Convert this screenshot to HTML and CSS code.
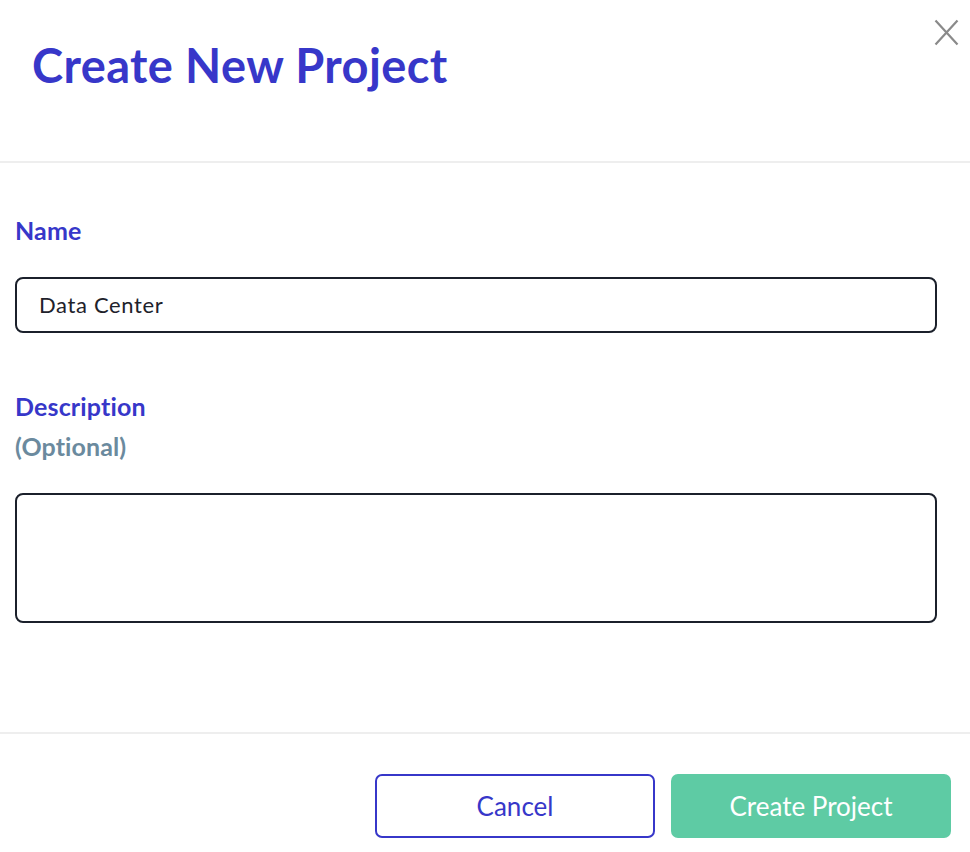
FILE: index.html
```html
<!DOCTYPE html>
<html>
<head>
<meta charset="utf-8">
<link rel="stylesheet" href="styles.css">
</head>
<body>
<div class="modal">
  <header class="modal-header">
    <h1 class="title">Create New Project</h1>
    <button class="close" aria-label="Close">
      <svg width="25" height="27" viewBox="0 0 25 27"><path d="M1.5 1.5 L23.5 25.5 M23.5 1.5 L1.5 25.5" stroke="#8a8a8a" stroke-width="2.2" fill="none"/></svg>
    </button>
  </header>
  <main class="modal-body">
    <label class="label name-label">Name</label>
    <div class="input">Data Center</div>
    <label class="label desc-label">Description</label>
    <div class="optional">(Optional)</div>
    <div class="textarea"></div>
  </main>
  <footer class="modal-footer">
    <button class="btn btn-cancel">Cancel</button>
    <button class="btn btn-create">Create Project</button>
  </footer>
</div>
</body>
</html>
```

FILE: styles.css
```css
html, body {
  margin: 0;
  padding: 0;
  background: #ffffff;
}
body {
  font-family: Lato, "Open Sans", sans-serif;
  width: 970px;
  height: 852px;
  overflow: hidden;
}
.modal {
  display: flex;
  flex-direction: column;
}
.modal-header {
  height: 161px;
  border-bottom: 2px solid #eeeeee;
  display: flex;
  justify-content: space-between;
  align-items: flex-start;
  padding: 0 11px 0 32px;
}
.title {
  margin: 37px 0 0 0;
  font-size: 47px;
  line-height: 56px;
  font-weight: 700;
  color: #3737c9;
  letter-spacing: 0.4px;
}
.close {
  margin-top: 19px;
  padding: 0;
  border: 0;
  background: none;
  display: flex;
}
.modal-body {
  height: 569px;
  border-bottom: 2px solid #eeeeee;
  padding: 0 33px 0 15px;
  display: flex;
  flex-direction: column;
}
.label {
  display: block;
  font-size: 25px;
  line-height: 28px;
  font-weight: 700;
  color: #3737c9;
  padding-left: 0;
  letter-spacing: 0.15px;
}
.name-label {
  margin-top: 53px;
}
.input {
  margin-top: 33px;
  height: 52px;
  border: 2px solid #1b202b;
  border-radius: 8px;
  box-sizing: content-box;
  padding: 0 22px;
  font-size: 22px;
  line-height: 52px;
  letter-spacing: 0.65px;
  color: #1e222b;
}
.desc-label {
  margin-top: 59px;
}
.optional {
  margin-top: 12px;
  font-size: 25px;
  line-height: 28px;
  font-weight: 700;
  color: #6b8a9e;
  letter-spacing: 0.1px;
}
.textarea {
  margin-top: 33px;
  height: 126px;
  border: 2px solid #1b202b;
  border-radius: 8px;
}
.modal-footer {
  display: flex;
  justify-content: flex-end;
  gap: 16px;
  padding: 40px 19px 0 0;
}
.btn {
  width: 280px;
  height: 64px;
  border-radius: 7px;
  font-family: Lato, "Open Sans", sans-serif;
  font-size: 26px;
  font-weight: 400;
  cursor: pointer;
}
.btn-cancel {
  background: #ffffff;
  border: 2px solid #3737c9;
  color: #3737c9;
}
.btn-create {
  background: #5ecba4;
  border: 0;
  color: #ffffff;
}
```
